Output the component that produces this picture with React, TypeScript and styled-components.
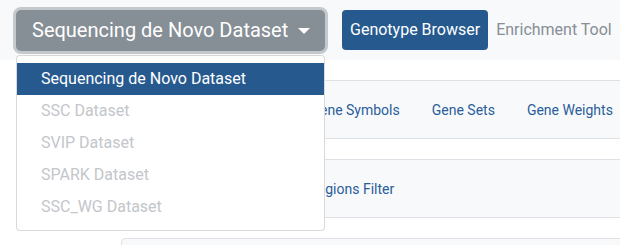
import styled, { createGlobalStyle } from "styled-components";

const GlobalStyle = createGlobalStyle`
  html, body {
    margin: 0;
    padding: 0;
    background: #fff;
    font-family: Roboto, "Liberation Sans", Arial, sans-serif;
  }
  #root {
    width: 620px;
    height: 245px;
    overflow: hidden;
    position: relative;
  }
`;

const datasets = [
  "Sequencing de Novo Dataset",
  "SSC Dataset",
  "SVIP Dataset",
  "SPARK Dataset",
  "SSC_WG Dataset",
];

const App = () => {
  return (
    <>
      <GlobalStyle />
      <TopBar>
        <DatasetDropdown>
          <DropdownToggle type="button">
            Sequencing de Novo Dataset
            <Caret />
          </DropdownToggle>
          <DropdownMenu>
            {datasets.map((name, i) => (
              <MenuItem key={name} $active={i === 0}>
                {name}
              </MenuItem>
            ))}
          </DropdownMenu>
        </DatasetDropdown>
        <ToolNav>
          <ToolLink $active>Genotype Browser</ToolLink>
          <ToolLink>Enrichment Tool</ToolLink>
        </ToolNav>
      </TopBar>

      <Content>
        <FilterBar>
          <TabList $offset={44}>
            <Tab>Present in Child</Tab>
            <Tab>Gene Symbols</Tab>
            <Tab>Gene Sets</Tab>
            <Tab>Gene Weights</Tab>
          </TabList>
        </FilterBar>
        <FilterBar>
          <TabList $offset={113}>
            <Tab>Genomic Regions Filter</Tab>
          </TabList>
        </FilterBar>
        <Panel />
      </Content>
    </>
  );
};

const TopBar = styled.div`
  display: flex;
  align-items: center;
  height: 60px;
  padding-left: 16px;
  background: #f8f9fa;
`;

const DatasetDropdown = styled.div`
  position: relative;
  z-index: 10;
`;

const DropdownToggle = styled.button`
  display: flex;
  align-items: center;
  justify-content: space-between;
  width: 309px;
  height: 41px;
  padding: 0 15px 0 16px;
  border: none;
  border-radius: 5px;
  background: #868e96;
  color: #fff;
  font-family: inherit;
  font-size: 20px;
  box-shadow: 0 0 0 3px rgba(134, 142, 150, 0.45);
  cursor: pointer;
`;

const Caret = styled.span`
  width: 0;
  height: 0;
  margin-top: 1px;
  border-top: 6px solid #fff;
  border-left: 6px solid transparent;
  border-right: 6px solid transparent;
`;

const DropdownMenu = styled.div`
  position: absolute;
  top: 45px;
  left: 0;
  width: 309px;
  box-sizing: border-box;
  padding: 7px 0;
  background: #fff;
  border: 1px solid rgba(0, 0, 0, 0.15);
  border-radius: 4px;
`;

const MenuItem = styled.div<{ $active?: boolean }>`
  height: 32px;
  line-height: 32px;
  padding: 0 24px;
  font-size: 16px;
  white-space: nowrap;
  color: ${(p) => (p.$active ? "#fff" : "#c3c6ca")};
  background: ${(p) => (p.$active ? "#265a8f" : "transparent")};
`;

const ToolNav = styled.nav`
  display: flex;
  align-items: center;
  margin-left: 17px;
`;

const ToolLink = styled.a<{ $active?: boolean }>`
  display: block;
  height: 40px;
  line-height: 40px;
  padding: 0 8px;
  border-radius: 4px;
  font-size: 16px;
  white-space: nowrap;
  color: ${(p) => (p.$active ? "#fff" : "#868e96")};
  background: ${(p) => (p.$active ? "#265a8f" : "transparent")};
`;

const Content = styled.div`
  display: flex;
  flex-direction: column;
  gap: 20px;
  padding: 20px 0 0 121px;
  width: 620px;
  box-sizing: border-box;
`;

const FilterBar = styled.div`
  height: 57px;
  margin-right: -20px;
  display: flex;
  align-items: center;
  background: #f8f9fa;
  border-top: 1px solid #dee2e6;
  border-bottom: 1px solid #dee2e6;
`;

const TabList = styled.div<{ $offset: number }>`
  display: flex;
  flex-wrap: nowrap;
  padding-left: ${(p) => p.$offset}px;
`;

const Tab = styled.a`
  padding: 0 16px;
  font-size: 14px;
  white-space: nowrap;
  color: #2a5d9a;
`;

const Panel = styled.div`
  height: 40px;
  margin-right: -20px;
  background: #f8f9fa;
  border: 1px solid #dee2e6;
  border-radius: 4px 0 0 0;
`;

export default App;
